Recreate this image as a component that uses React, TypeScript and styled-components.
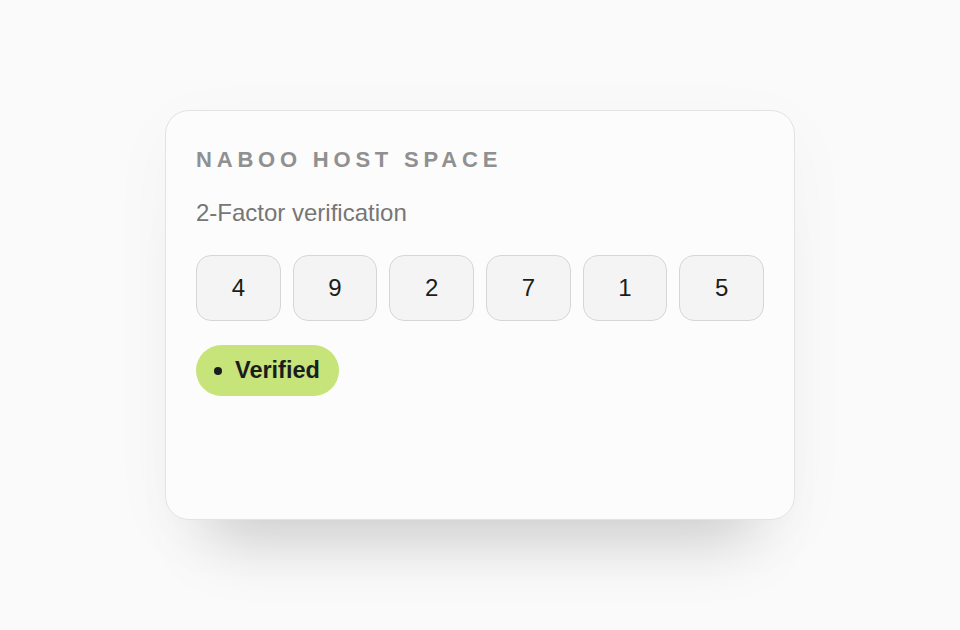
import styled, { createGlobalStyle } from 'styled-components';

const GlobalStyle = createGlobalStyle`
  html, body {
    margin: 0;
    padding: 0;
    background: #fafafa;
    font-family: 'Liberation Sans', Arial, sans-serif;
  }
  * {
    box-sizing: border-box;
  }
`;

const digits = ['4', '9', '2', '7', '1', '5'];

export default function App(): JSX.Element {
  return (
    <>
      <GlobalStyle />
      <Page>
        <Card>
          <Brand>NABOO HOST SPACE</Brand>
          <Subtitle>2-Factor verification</Subtitle>
          <CodeRow>
            {digits.map((d, i) => (
              <CodeBox key={i}>{d}</CodeBox>
            ))}
          </CodeRow>
          <StatusBadge>
            <Dot />
            Verified
          </StatusBadge>
        </Card>
      </Page>
    </>
  );
}

const Page = styled.div`
  width: 960px;
  height: 630px;
  display: flex;
  align-items: center;
  justify-content: center;
  background: #fafafa;
`;

const Card = styled.div`
  width: 630px;
  height: 410px;
  padding: 36px 30px 30px 30px;
  background: #fcfcfc;
  border: 1px solid #e3e3e3;
  border-radius: 24px;
  display: flex;
  flex-direction: column;
  align-items: flex-start;
  box-shadow: 0 64px 60px -44px rgba(0, 0, 0, 0.17),
    0 16px 70px rgba(0, 0, 0, 0.03);
`;

const Brand = styled.div`
  font-size: 22px;
  line-height: 25px;
  font-weight: 700;
  letter-spacing: 4.8px;
  color: #909090;
`;

const Subtitle = styled.div`
  margin-top: 27px;
  font-size: 24px;
  line-height: 28px;
  color: #767676;
`;

const CodeRow = styled.div`
  margin-top: 28px;
  width: 100%;
  display: grid;
  grid-template-columns: repeat(6, 1fr);
  gap: 12px;
`;

const CodeBox = styled.div`
  height: 66px;
  display: flex;
  align-items: center;
  justify-content: center;
  background: #f4f4f4;
  border: 1.5px solid #d6d6d6;
  border-radius: 15px;
  font-size: 24px;
  color: #1c1c1c;
`;

const StatusBadge = styled.div`
  margin-top: 24px;
  height: 51px;
  padding: 0 19px 0 18px;
  display: flex;
  align-items: center;
  gap: 13px;
  background: #c6e479;
  border-radius: 26px;
  font-size: 23.5px;
  font-weight: 700;
  color: #1a1d1f;
`;

const Dot = styled.span`
  width: 8px;
  height: 8px;
  border-radius: 50%;
  background: #1a1d1f;
`;
